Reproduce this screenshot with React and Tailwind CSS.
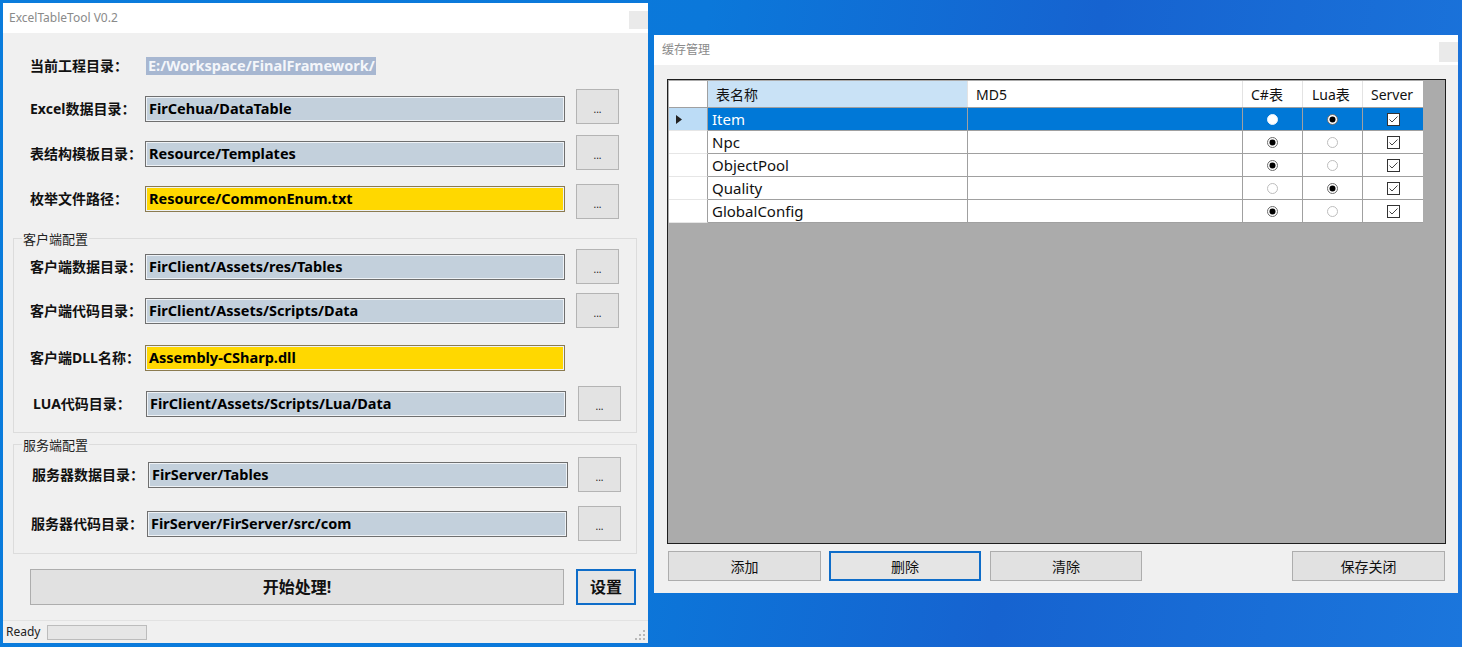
import React from "react";

const F = "font-['Noto_Sans','Noto_Sans_CJK_SC',sans-serif]";
const L = "text-[14px] leading-[18px] font-bold text-[#111] whitespace-nowrap";

function Dots() {
  return (
    <div className="w-[43px] h-[35px] bg-[#e3e3e3] border border-[#b4b4b4] flex items-end justify-center pb-[9px] text-[10px] leading-none text-[#222] shrink-0">
      ...
    </div>
  );
}

function Input({ value, yellow, w = "w-[420px]" }) {
  return (
    <div
      className={
        (yellow
          ? "bg-[#ffd800] border-[#8b7b50] "
          : "bg-[#c3d0dc] border-[#6f6f6f] ") +
        w +
        " h-[26px] border shadow-[inset_0_0_0_1px_#eef2f6] flex items-center pl-[3px] text-[14.5px] font-bold text-black whitespace-nowrap overflow-hidden shrink-0"
      }
    >
      {value}
    </div>
  );
}

function Radio({ on, sel }) {
  return (
    <svg width="11" height="11" viewBox="0 0 11 11">
      {on ? (
        <>
          <circle cx="5.5" cy="5.5" r="5" fill="#fff" stroke="#6a6a6a" strokeWidth="1" />
          <circle cx="5.5" cy="5.5" r="3" fill="#000" />
        </>
      ) : (
        <circle cx="5.5" cy="5.5" r="5" fill="#fff" stroke={sel ? "#e8f2fc" : "#bdbdbd"} strokeWidth="1" />
      )}
    </svg>
  );
}

function Check() {
  return (
    <svg width="13" height="13" viewBox="0 0 13 13">
      <rect x="0.5" y="0.5" width="12" height="12" fill="#fff" stroke="#333" strokeWidth="1" />
      <path d="M2.5 6.5 L5 9 L10.5 3.5" fill="none" stroke="#444" strokeWidth="1" />
    </svg>
  );
}

const rows = [
  { name: "Item", cs: false, lua: true },
  { name: "Npc", cs: true, lua: false },
  { name: "ObjectPool", cs: true, lua: false },
  { name: "Quality", cs: false, lua: true },
  { name: "GlobalConfig", cs: true, lua: false },
];

export default function App() {
  return (
    <div
      className={
        F +
        " relative w-[1462px] h-[647px] overflow-hidden bg-[linear-gradient(100deg,#0a7cdc_0%,#0b78da_45%,#1663d0_70%,#1b76dc_100%)]"
      }
    >
      {/* Left window */}
      <div className="absolute left-[3px] top-[3px] w-[645px] h-[640px] bg-[#f0f0f0] flex flex-col">
        <div className="h-[30px] bg-white flex items-start justify-between shrink-0">
          <span className="pl-[6px] pt-[7px] text-[12px] leading-[16px] text-[#8a8a8a]">ExcelTableTool V0.2</span>
          <div className="w-[19px] h-[18px] mt-[8px] bg-[#eaeaea]" />
        </div>
        <div className="flex flex-col pl-[10px]">
          {/* row 1 */}
          <div className="flex items-center h-[18px] mt-[24px] ml-[17px]">
            <div className={"w-[116px] " + L}>当前工程目录：</div>
            <div className="h-[18px] w-[230px] bg-[#a7b7d1] text-[#f4f6fa] text-[14.5px] font-bold flex items-center pl-[2px] whitespace-nowrap">
              E:/Workspace/FinalFramework/
            </div>
          </div>
          {/* row 2 */}
          <div className="flex h-[35px] mt-[14px]">
            <div className="flex items-center h-[26px] mt-[7px] ml-[17px]">
              <div className={"w-[115px] " + L}>Excel数据目录：</div>
              <Input value="FirCehua/DataTable" />
            </div>
            <div className="ml-[11px]"><Dots /></div>
          </div>
          {/* row 3 */}
          <div className="flex h-[35px] mt-[11px]">
            <div className="flex items-center h-[26px] mt-[6px] ml-[17px]">
              <div className={"w-[115px] " + L}>表结构模板目录：</div>
              <Input value="Resource/Templates" />
            </div>
            <div className="ml-[11px]"><Dots /></div>
          </div>
          {/* row 4 */}
          <div className="flex h-[35px] mt-[14px]">
            <div className="flex items-center h-[26px] mt-[2px] ml-[17px]">
              <div className={"w-[115px] " + L}>枚举文件路径：</div>
              <Input value="Resource/CommonEnum.txt" yellow />
            </div>
            <div className="ml-[11px]"><Dots /></div>
          </div>

          {/* group 1 */}
          <div className="relative w-[624px] mt-[19px] border border-[#dcdcdc] pb-[11px]">
            <div className="absolute left-[8px] top-[-8px] bg-[#f0f0f0] px-px text-[13px] leading-[16px] text-[#222]">客户端配置</div>
            <div className="flex h-[35px] mt-[10px]">
              <div className="flex items-center h-[26px] mt-[5px] ml-[16px]">
                <div className={"w-[115px] " + L}>客户端数据目录：</div>
                <Input value="FirClient/Assets/res/Tables" />
              </div>
              <div className="ml-[11px]"><Dots /></div>
            </div>
            <div className="flex h-[35px] mt-[9px]">
              <div className="flex items-center h-[26px] mt-[5px] ml-[16px]">
                <div className={"w-[115px] " + L}>客户端代码目录：</div>
                <Input value="FirClient/Assets/Scripts/Data" />
              </div>
              <div className="ml-[11px]"><Dots /></div>
            </div>
            <div className="flex h-[35px] mt-[12px]">
              <div className="flex items-center h-[26px] mt-[5px] ml-[16px]">
                <div className={"w-[115px] " + L}>客户端DLL名称：</div>
                <Input value="Assembly-CSharp.dll" yellow />
              </div>
            </div>
            <div className="flex h-[35px] mt-[11px]">
              <div className="flex items-center h-[26px] mt-[5px] ml-[19px]">
                <div className={"w-[113px] " + L}>LUA代码目录：</div>
                <Input value="FirClient/Assets/Scripts/Lua/Data" />
              </div>
              <div className="ml-[12px]"><Dots /></div>
            </div>
          </div>

          {/* group 2 */}
          <div className="relative w-[624px] mt-[11px] border border-[#dcdcdc] pb-[12px]">
            <div className="absolute left-[8px] top-[-8px] bg-[#f0f0f0] px-px text-[13px] leading-[16px] text-[#222]">服务端配置</div>
            <div className="flex h-[35px] mt-[12px]">
              <div className="flex items-center h-[26px] mt-[5px] ml-[18px]">
                <div className={"w-[116px] " + L}>服务器数据目录：</div>
                <Input value="FirServer/Tables" />
              </div>
              <div className="ml-[10px]"><Dots /></div>
            </div>
            <div className="flex h-[35px] mt-[14px]">
              <div className="flex items-center h-[26px] mt-[5px] ml-[17px]">
                <div className={"w-[116px] " + L}>服务器代码目录：</div>
                <Input value="FirServer/FirServer/src/com" />
              </div>
              <div className="ml-[11px]"><Dots /></div>
            </div>
          </div>

          {/* buttons */}
          <div className="flex mt-[15px]">
            <div className="ml-[17px] w-[534px] h-[36px] bg-[#e1e1e1] border border-[#adadad] flex items-center justify-center text-[16px] font-bold text-[#111]">
              开始处理!
            </div>
            <div className="ml-[12px] w-[60px] h-[36px] bg-[#e5e5e5] border-2 border-[#0f6dc9] flex items-center justify-center text-[16px] font-bold text-[#111]">
              设置
            </div>
          </div>
        </div>
        <div className="flex-1" />
        <div className="h-[23px] shrink-0 border-t border-[#e2e2e2] flex items-center pl-[3px] relative">
          <span className="text-[12px] text-[#222]">Ready</span>
          <div className="ml-[7px] w-[100px] h-[15px] bg-[#e6e6e6] border border-[#bcbcbc]" />
          <svg className="absolute right-[3px] bottom-[3px]" width="10" height="10" viewBox="0 0 10 10">
            <rect x="8" y="0" width="2" height="2" fill="#b8b8b8" />
            <rect x="4" y="4" width="2" height="2" fill="#b8b8b8" />
            <rect x="8" y="4" width="2" height="2" fill="#b8b8b8" />
            <rect x="0" y="8" width="2" height="2" fill="#b8b8b8" />
            <rect x="4" y="8" width="2" height="2" fill="#b8b8b8" />
            <rect x="8" y="8" width="2" height="2" fill="#b8b8b8" />
          </svg>
        </div>
      </div>

      {/* Right window */}
      <div className="absolute left-[654px] top-[35px] w-[804px] h-[558px] bg-[#f0f0f0] flex flex-col">
        <div className="h-[30px] bg-white flex items-start justify-between shrink-0">
          <span className="pl-[8px] pt-[7px] text-[12px] leading-[16px] text-[#8a8a8a]">缓存管理</span>
          <div className="w-[19px] h-[20px] mt-[7px] bg-[#eaeaea]" />
        </div>
        <div className="pl-[13px] pt-[14px] flex flex-col">
          <div className="w-[779px] h-[465px] border border-[#1e1e1e] bg-[#ababab] p-px">
            {/* header */}
            <div className="flex h-[27px] bg-white border-b border-[#a0a0a0] text-[14px] text-[#111] w-[754px]">
              <div className="w-[39px] border-r border-[#a0a0a0]" />
              <div className="w-[260px] bg-[#c9e2f6] border-r border-[#e3e3e3] flex items-center pl-[8px]">表名称</div>
              <div className="w-[275px] border-r border-[#e3e3e3] flex items-center pl-[8px]">MD5</div>
              <div className="w-[60px] border-r border-[#e3e3e3] flex items-center pl-[8px]">C#表</div>
              <div className="w-[60px] border-r border-[#e3e3e3] flex items-center pl-[9px]">Lua表</div>
              <div className="w-[60px] flex items-center pl-[8px]">Server</div>
            </div>
            {rows.map((r, i) => {
              const sel = i === 0;
              return (
                <div key={r.name} className="flex h-[23px] w-[754px] text-[15px]">
                  <div className={(sel ? "bg-[#bcdcf6] " : "bg-white ") + "w-[39px] border-r border-b border-r-[#a0a0a0] border-b-[#e6e6e6] flex items-center pl-[7px]"}>
                    {sel && (
                      <svg width="6" height="9" viewBox="0 0 6 9"><path d="M0 0 L6 4.5 L0 9 Z" fill="#222" /></svg>
                    )}
                  </div>
                  <div className={(sel ? "bg-[#0078d7] text-white " : "bg-white text-[#111] ") + "w-[260px] border-r border-b border-[#a0a0a0] flex items-center pl-[4px] leading-none"}>
                    {r.name}
                  </div>
                  <div className={(sel ? "bg-[#0078d7] " : "bg-white ") + "w-[275px] border-r border-b border-[#a0a0a0]"} />
                  <div className={(sel ? "bg-[#0078d7] " : "bg-white ") + "w-[60px] border-r border-b border-[#a0a0a0] flex items-center justify-center"}>
                    <Radio on={r.cs} sel={sel} />
                  </div>
                  <div className={(sel ? "bg-[#0078d7] " : "bg-white ") + "w-[60px] border-r border-b border-[#a0a0a0] flex items-center justify-center"}>
                    <Radio on={r.lua} sel={sel} />
                  </div>
                  <div className={(sel ? "bg-[#0078d7] " : "bg-white ") + "w-[60px] border-b border-[#a0a0a0] flex items-center justify-center"}>
                    <Check />
                  </div>
                </div>
              );
            })}
          </div>
          <div className="flex mt-[7px] text-[14px] text-[#111]">
            <div className="ml-px w-[153px] h-[30px] bg-[#e1e1e1] border border-[#adadad] flex items-center justify-center">添加</div>
            <div className="ml-[8px] w-[152px] h-[30px] bg-[#e5e5e5] border-2 border-[#0f6dc9] flex items-center justify-center">删除</div>
            <div className="ml-[9px] w-[152px] h-[30px] bg-[#e1e1e1] border border-[#adadad] flex items-center justify-center">清除</div>
            <div className="ml-[150px] w-[153px] h-[30px] bg-[#e1e1e1] border border-[#adadad] flex items-center justify-center">保存关闭</div>
          </div>
        </div>
      </div>
    </div>
  );
}
